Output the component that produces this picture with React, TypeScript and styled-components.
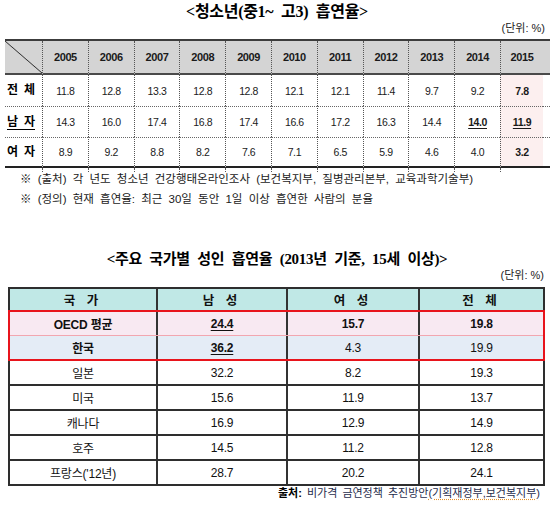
import { FC } from 'react';
import styled, { createGlobalStyle } from 'styled-components';

const GlobalStyle = createGlobalStyle`
  *, *::before, *::after { box-sizing: border-box; }
  html, body { margin: 0; padding: 0; background: #fff; }
  body {
    font-family: 'Liberation Sans', 'Noto Sans CJK KR', sans-serif;
    color: #111;
  }
`;

const Page = styled.div`
  width: 554px;
  height: 524px;
  overflow: hidden;
`;

const Title = styled.h2<{ $size: number; $gap: number }>`
  margin: 0;
  font-family: 'Liberation Serif', 'Noto Sans CJK KR', serif;
  font-weight: bold;
  font-size: ${(p) => p.$size}px;
  line-height: 18px;
  text-align: center;
  word-spacing: ${(p) => p.$gap}px;
  letter-spacing: -0.3px;
  color: #000;
`;

const Unit = styled.div<{ $right: number }>`
  font-size: 11px;
  line-height: 14px;
  text-align: right;
  padding-right: ${(p) => p.$right}px;
  color: #222;
`;

/* ---- first table: youth smoking by year ---- */

const TopSection = styled.section`
  padding-top: 3px;
`;

const YearGrid = styled.div`
  margin: 4px 0 0 5px;
  width: 545px;
  display: grid;
  grid-template-columns: 37px repeat(10, 45.8px) 43px 7px;
  grid-template-rows: 34px 31px 31px 31px 4px;
  border-top: 2px solid #3c3c3c;
`;

const YCell = styled.div<{
  $head?: boolean;
  $pink?: boolean;
  $divider?: boolean;
  $dotTop?: boolean;
  $bottom?: boolean;
  $tick?: boolean;
}>`
  display: flex;
  align-items: center;
  justify-content: center;
  white-space: nowrap;
  font-size: ${(p) => (p.$head ? 11 : 10.5)}px;
  font-weight: ${(p) => (p.$head ? 'bold' : 'normal')};
  letter-spacing: -0.4px;
  color: #1a1a1a;
  background: ${(p) =>
    p.$tick ? 'transparent' : p.$head ? '#d4d4d4' : p.$pink ? '#fcefef' : '#fff'};
  border-left: ${(p) => (p.$divider ? '1px dotted #555' : 'none')};
  border-top: ${(p) => (p.$dotTop ? '1px dotted #666' : 'none')};
  border-bottom: ${(p) =>
    p.$head ? '2px solid #4a4a4a' : p.$bottom ? '2px solid #222' : 'none'};
`;

const Corner = styled(YCell)`
  background: linear-gradient(
      to top right,
      transparent calc(50% - 0.8px),
      #333 50%,
      transparent calc(50% + 0.8px)
    ),
    #d4d4d4;
`;

const RowLabel = styled(YCell)`
  justify-content: flex-start;
  padding-left: 2px;
  font-size: 12px;
  font-weight: bold;
  letter-spacing: 0;
  color: #000;
`;

const LabelText = styled.span<{ $under?: boolean }>`
  display: flex;
  gap: 6px;
  line-height: 14px;
  border-bottom: ${(p) => (p.$under ? '1px solid #000' : '1px solid transparent')};
`;

const Mark = styled.span<{ $under?: boolean }>`
  font-weight: bold;
  text-decoration: ${(p) => (p.$under ? 'underline' : 'none')};
  text-underline-offset: 2px;
  letter-spacing: -0.4px;
`;

const Notes = styled.div`
  display: flex;
  flex-direction: column;
  gap: 6px;
  padding-left: 20px;
`;

const Note = styled.p`
  margin: 0;
  font-size: 11.5px;
  line-height: 14px;
  word-spacing: 3px;
  color: #1a1a1a;
`;

/* ---- second table: adult smoking by country ---- */

const BottomSection = styled.section`
  margin-top: 44px;
`;

const CountryTable = styled.div`
  margin: 5px 0 0 8px;
  width: 537px;
`;

const Row = styled.div<{ $bg?: string; $h: number; $sep?: string; $open?: boolean }>`
  display: flex;
  height: ${(p) => p.$h}px;
  background: ${(p) => p.$bg ?? '#fff'};
  border-left: ${(p) => (p.$open ? 'none' : '2px solid #2e2e2e')};
  border-right: ${(p) => (p.$open ? 'none' : '2px solid #2e2e2e')};
  border-bottom: ${(p) => p.$sep ?? 'none'};
`;

const HeadRow = styled(Row)`
  border-top: 2px solid #2e2e2e;
  font-weight: bold;
`;

const RedGroup = styled.div`
  border: 2px solid #e8141c;
`;

const CCell = styled.div<{ $w?: number; $bold?: boolean; $head?: boolean }>`
  ${(p) => (p.$w ? `width: ${p.$w}px;` : 'flex: 1;')}
  display: flex;
  align-items: center;
  justify-content: center;
  font-size: ${(p) => (p.$head ? 12.5 : 12)}px;
  font-weight: ${(p) => (p.$bold || p.$head ? 'bold' : 'normal')};
  letter-spacing: ${(p) => (p.$head ? '4px' : '-0.2px')};
  color: #111;
  & + & {
    border-left: 2px solid #333;
  }
`;

const Under = styled.span`
  text-decoration: underline;
  text-underline-offset: 2px;
`;

const Source = styled.div`
  width: 545px;
  padding-right: 5px;
  text-align: right;
  font-size: 11px;
  line-height: 14px;
  word-spacing: 2px;
  color: #1f2d4d;
`;

const SourceLead = styled.span`
  color: #000;
  font-weight: bold;
`;

const Squiggle = styled.span`
  text-decoration: underline dotted #e4922c;
  text-underline-offset: 2px;
`;

const years = ['2005', '2006', '2007', '2008', '2009', '2010', '2011', '2012', '2013', '2014', '2015'];

const youth = [
  { label: ['전', '체'], under: false, values: ['11.8', '12.8', '13.3', '12.8', '12.8', '12.1', '12.1', '11.4', '9.7', '9.2', '7.8'], marked: [10], underMarked: [] as number[] },
  { label: ['남', '자'], under: true, values: ['14.3', '16.0', '17.4', '16.8', '17.4', '16.6', '17.2', '16.3', '14.4', '14.0', '11.9'], marked: [9, 10], underMarked: [9, 10] },
  { label: ['여', '자'], under: false, values: ['8.9', '9.2', '8.8', '8.2', '7.6', '7.1', '6.5', '5.9', '4.6', '4.0', '3.2'], marked: [10], underMarked: [] as number[] },
];

const widths = [146, 130, 132];

const countries = [
  ['일본', '32.2', '8.2', '19.3'],
  ['미국', '15.6', '11.9', '13.7'],
  ['캐나다', '16.9', '12.9', '14.9'],
  ['호주', '14.5', '11.2', '12.8'],
  ["프랑스('12년)", '28.7', '20.2', '24.1'],
];

const App: FC = () => {
  return (
    <>
      <GlobalStyle />
      <Page>
        <TopSection>
          <Title $size={16} $gap={4}>&lt;청소년(중1~ 고3) 흡연율&gt;</Title>
          <Unit $right={9}>(단위: %)</Unit>
          <YearGrid>
            <Corner $head />
            {years.map((y) => (
              <YCell key={y} $head $divider>
                {y}
              </YCell>
            ))}
            <YCell $head />
            {youth.map((r, ri) => {
              const last = ri === youth.length - 1;
              const key = r.label.join('');
              return [
                <RowLabel key={key} $dotTop={ri > 0} $bottom={last}>
                  <LabelText $under={r.under}>
                    {r.label.map((ch) => (
                      <span key={ch}>{ch}</span>
                    ))}
                  </LabelText>
                </RowLabel>,
                ...r.values.map((v, i) => (
                  <YCell key={`${key}-${i}`} $divider $pink={i === 10} $dotTop={ri > 0} $bottom={last}>
                    {r.marked.includes(i) ? <Mark $under={r.underMarked.includes(i)}>{v}</Mark> : v}
                  </YCell>
                )),
                <YCell key={`${key}-f`} $dotTop={ri > 0} $bottom={last} />,
              ];
            })}
            <YCell $tick />
            {years.map((y) => (
              <YCell key={`t${y}`} $tick $divider />
            ))}
            <YCell $tick />
          </YearGrid>
          <Notes>
            <Note>※ (출처) 각 년도 청소년 건강행태온라인조사 (보건복지부, 질병관리본부, 교육과학기술부)</Note>
            <Note>※ (정의) 현재 흡연율: 최근 30일 동안 1일 이상 흡연한 사람의 분율</Note>
          </Notes>
        </TopSection>

        <BottomSection>
          <Title $size={15} $gap={4}>&lt;주요 국가별 성인 흡연율 (2013년 기준, 15세 이상)&gt;</Title>
          <Unit $right={10}>(단위: %)</Unit>
          <CountryTable>
            <HeadRow $h={23} $bg="#c0e8e6">
              <CCell $w={widths[0]} $head>국 가</CCell>
              <CCell $w={widths[1]} $head>남 성</CCell>
              <CCell $w={widths[2]} $head>여 성</CCell>
              <CCell $head>전 체</CCell>
            </HeadRow>
            <RedGroup>
              <Row $open $h={24} $bg="#f8e9f2" $sep="1px solid #f2a6b0">
                <CCell $w={widths[0]} $bold>OECD 평균</CCell>
                <CCell $w={widths[1]} $bold><Under>24.4</Under></CCell>
                <CCell $w={widths[2]} $bold>15.7</CCell>
                <CCell $bold>19.8</CCell>
              </Row>
              <Row $open $h={23} $bg="#e4ecf6">
                <CCell $w={widths[0]} $bold>한국</CCell>
                <CCell $w={widths[1]} $bold><Under>36.2</Under></CCell>
                <CCell $w={widths[2]}>4.3</CCell>
                <CCell>19.9</CCell>
              </Row>
            </RedGroup>
            {countries.map((c) => (
              <Row key={c[0]} $h={25} $sep="2px solid #2e2e2e">
                <CCell $w={widths[0]}>{c[0]}</CCell>
                <CCell $w={widths[1]}>{c[1]}</CCell>
                <CCell $w={widths[2]}>{c[2]}</CCell>
                <CCell>{c[3]}</CCell>
              </Row>
            ))}
          </CountryTable>
          <Source>
            <SourceLead>출처:</SourceLead> 비가격 금연정책 추진방안<Squiggle>(기획재정부,보건복지부)</Squiggle>
          </Source>
        </BottomSection>
      </Page>
    </>
  );
};

export default App;
